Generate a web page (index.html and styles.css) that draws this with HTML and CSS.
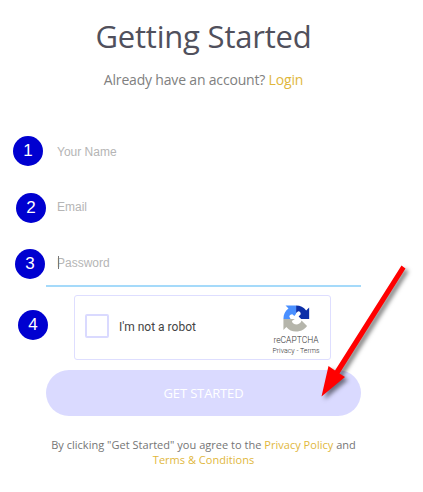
FILE: index.html
```html
<!DOCTYPE html>
<html lang="en">

<head>
	<meta charset="utf-8">
	<meta name="viewport" content="width=device-width,initial-scale=1">
	<title>Getting Started</title>
	<link rel="stylesheet" href="styles.css">
</head>

<body>
	<div class="signup">
		<h1>Getting Started</h1>
		<p class="account">Already have an account? <a href="#">Login</a></p>

		<form class="signup-form">
			<div class="field">
				<span class="step step-1">1</span>
				<input type="text" placeholder="Your Name">
			</div>
			<div class="field">
				<span class="step step-2">2</span>
				<input type="text" placeholder="Email">
			</div>
			<div class="field active">
				<span class="step step-3">3</span>
				<span class="caret"></span>
				<input type="password" placeholder="Password">
			</div>

			<div class="captcha-row">
				<span class="step step-4">4</span>
				<div class="captcha">
					<span class="checkbox"></span>
					<span class="captcha-label">I'm not a robot</span>
					<div class="captcha-brand">
						<svg width="27" height="27" viewBox="0 0 64 64">
							<path fill="#0c2fa8" d="M62 33V6l-7 7C49 5 41 1 31 1v18l5-4c4 0 6 3 6 7l-5 5 6 6z" />
							<path fill="#4a90ff" d="M31 1H6l7 7C5 14 1 22 1 33h17l-3-5c0-4 3-6 7-6l5 4 4-5z" />
							<path fill="#b5b5ab" d="M1 33v26l7-7c6 7 13 11 23 11 12 0 20-5 26-13L44 37c-2 6-6 9-11 9-7 0-11-3-12-8l7-5z" />
						</svg>
						<span class="brand-name">reCAPTCHA</span>
						<span class="brand-links">Privacy - Terms</span>
					</div>
				</div>
			</div>

			<button type="button" class="submit">GET STARTED</button>
		</form>

		<p class="terms">By clicking "Get Started" you agree to the <a href="#">Privacy Policy</a> and<br><a href="#">Terms &amp; Conditions</a></p>

		<!-- pointer to the submit button -->
		<svg class="arrow" width="110" height="150" viewBox="0 0 110 150">
			<path fill="#ff0000" d="M87.500 5.500L91.500 8.500L25.500 113.500L31 117L7.500 136.500L14.500 106L21 110.500z" />
		</svg>
	</div>
</body>

</html>
```

FILE: styles.css
```css
body {
	margin: 0;
	background: #fff;
	color: #757575;
	font-family: "Open Sans", sans-serif;
}

a {
	color: #dfb73c;
	text-decoration: none;
}

.signup {
	position: relative;
	width: 315px;
	height: 492px;
	margin-left: 46px;
}

h1 {
	margin: 0;
	padding-top: 14px;
	color: #50505c;
	font-size: 31px;
	font-weight: 400;
	letter-spacing: -0.2px;
	line-height: 44px;
	text-align: center;
}

.account {
	margin: 0;
	padding-top: 12px;
	color: #808080;
	font-size: 14px;
	letter-spacing: -0.18px;
	line-height: 20px;
	text-align: center;
}

.signup-form {
	margin-top: 32px;
}

.field {
	position: relative;
	box-sizing: border-box;
	height: 55px;
	padding: 20px 11px 0;
}

.field input {
	display: block;
	width: 100%;
	height: 20px;
	padding: 0;
	border: 0;
	outline: 0;
	background: none;
	font-family: "Liberation Sans", Arial, sans-serif;
	font-size: 12px;
}

.field input::placeholder {
	color: #b5b5b5;
}

.field.active {
	padding-top: 21px;
	border-bottom: 2px solid #a5dafa;
}

.caret {
	position: absolute;
	left: 12px;
	top: 24px;
	width: 1px;
	height: 13px;
	background: #777;
}

/* numbered callouts beside each step */
.step {
	position: absolute;
	width: 30px;
	height: 30px;
	border-radius: 50%;
	background: #0000d0;
	color: #fff;
	font-family: "Liberation Sans", Arial, sans-serif;
	font-size: 17px;
	line-height: 30px;
	text-align: center;
}

.step-1 {
	left: -33px;
	top: 14px;
}

.step-2 {
	left: -30px;
	top: 16px;
}

.step-3 {
	left: -31px;
	top: 17px;
}

.step-4 {
	left: -28px;
	top: 23px;
}

.captcha-row {
	position: relative;
	padding: 8px 0 0 28px;
}

.captcha {
	display: flex;
	align-items: center;
	box-sizing: border-box;
	width: 257px;
	height: 65px;
	padding-left: 10px;
	border: 1px solid #dedeff;
	border-radius: 3px;
}

.checkbox {
	box-sizing: border-box;
	width: 24px;
	height: 24px;
	margin-top: -4px;
	border: 2px solid #dadaff;
	border-radius: 2px;
}

.captcha-label {
	margin-top: -2px;
	margin-left: 10px;
	color: #444;
	font-family: Roboto, sans-serif;
	font-size: 12px;
}

.captcha-brand {
	display: flex;
	flex-direction: column;
	align-items: center;
	width: 60px;
	margin-top: 5px;
	margin-left: auto;
	margin-right: 4px;
	color: #333;
	font-family: Roboto, sans-serif;
	font-weight: 300;
	white-space: nowrap;
}

.brand-name {
	margin-top: 3px;
	font-size: 8.500px;
	line-height: 11px;
}

.brand-links {
	font-size: 7px;
	line-height: 10px;
}

.submit {
	display: block;
	width: 100%;
	height: 46px;
	margin-top: 10px;
	padding: 0;
	border: 0;
	border-radius: 23px;
	background: #dadaff;
	color: #fff;
	font-family: "Open Sans", sans-serif;
	font-size: 13px;
	font-weight: 500;
	letter-spacing: -0.15px;
}

.terms {
	margin: 0 -20px;
	padding-top: 21px;
	font-size: 11px;
	letter-spacing: 0.02px;
	line-height: 15px;
	text-align: center;
}

.arrow {
	position: absolute;
	left: 268px;
	top: 260px;
	filter: drop-shadow(3px 3px 2px rgba(0, 0, 0, 0.5));
}
```
